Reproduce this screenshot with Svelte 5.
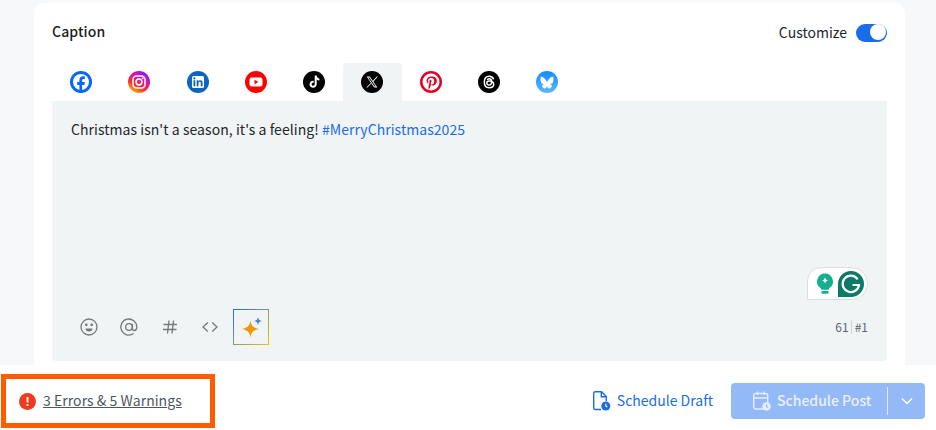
<script>
	const tabs = ['facebook', 'instagram', 'linkedin', 'youtube', 'tiktok', 'x', 'pinterest', 'threads', 'bluesky'];
	let active = 'x';
</script>

<div class="page">
	<main class="content">
		<section class="card">
			<div class="head">
				<h3>Caption</h3>
				<div class="customize">
					<span>Customize</span>
					<span class="toggle"><span class="knob"></span></span>
				</div>
			</div>

			<div class="tabs">
				{#each tabs as t}
					<div class="tab" class:active={t === active}>
						<svg width="22" height="22" viewBox="0 0 22 22">
							{#if t === 'facebook'}
								<circle cx="11" cy="11" r="11" fill="#0866ff" />
								<circle cx="11" cy="11" r="8" fill="#fff" />
								<path d="M9.4 22v-8H7.2v-3h2.2V9.2c0-2.9 1.4-4 3.6-4 .9 0 1.600.1 1.900.2v2.700h-1.300c-1.100 0-1.500.6-1.500 1.500V11h2.700l-.5 3h-2.200v8z" fill="#0866ff" />
							{:else if t === 'instagram'}
								<defs>
									<linearGradient id="ig" x1="0.2" y1="1" x2="0.8" y2="0">
										<stop offset="0" stop-color="#fdc20a" />
										<stop offset="0.35" stop-color="#f5302f" />
										<stop offset="0.7" stop-color="#d211b8" />
										<stop offset="1" stop-color="#7a1df0" />
									</linearGradient>
								</defs>
								<circle cx="11" cy="11" r="11" fill="url(#ig)" />
								<rect x="5" y="5" width="12" height="12" rx="3.500" fill="none" stroke="#fff" stroke-width="1.500" />
								<circle cx="11" cy="11" r="2.900" fill="none" stroke="#fff" stroke-width="1.500" />
								<circle cx="14.700" cy="7.300" r=".9" fill="#fff" />
							{:else if t === 'linkedin'}
								<circle cx="11" cy="11" r="11" fill="#0a66c2" />
								<rect x="5" y="5" width="12" height="12" rx="1.500" fill="#fff" />
								<rect x="6.500" y="9.300" width="1.800" height="6" fill="#0a66c2" />
								<circle cx="7.400" cy="7.400" r="1.050" fill="#0a66c2" />
								<path d="M9.700 9.300h1.700v.9c.4-.6 1-1.050 2-1.050 1.600 0 2.200 1 2.200 2.700v3.450h-1.800v-3.100c0-.9-.3-1.450-1.050-1.450-.8 0-1.250.55-1.250 1.450v3.100H9.700z" fill="#0a66c2" />
							{:else if t === 'youtube'}
								<circle cx="11" cy="11" r="11" fill="#ff0000" />
								<rect x="4.500" y="6.500" width="13" height="9" rx="2.200" fill="#fff" />
								<path d="M9.500 8.800v4.400l3.800-2.200z" fill="#ff0000" />
							{:else if t === 'tiktok'}
								<circle cx="11" cy="11" r="11" fill="#000" />
								<path d="M11.700 4.500h2c.1 1.700 1.100 2.800 2.700 2.900v2c-1 0-1.900-.3-2.700-.9v4.600c0 2.200-1.700 3.700-3.600 3.700-2 0-3.600-1.600-3.600-3.600 0-2.200 1.900-3.900 4.200-3.500v2.100c-1.100-.3-2.100.4-2.100 1.450 0 .9.700 1.500 1.500 1.500.9 0 1.600-.7 1.600-1.700z" fill="#fff" />
							{:else if t === 'x'}
								<circle cx="11" cy="11" r="11" fill="#000" />
								<path d="M5.600 5.500h3.200l7.600 11h-3.200zM7.200 6.400l6.400 9.200h1.200L8.400 6.400z" fill="#fff" />
								<path d="M15.800 5.500l-4.300 4.800.6.700 4.800-5.500zM9.800 12l-4.400 4.500h1.100l3.800-3.900z" fill="#fff" />
							{:else if t === 'pinterest'}
								<circle cx="11" cy="11" r="11" fill="#e60023" />
								<circle cx="11" cy="11" r="8.500" fill="#fff" />
								<path d="M11.300 5.600c-3 0-4.700 1.900-4.700 4 0 1 .5 2.200 1.400 2.600.3.100.3 0 .5-.7 0-.2 0-.3-.1-.5-.9-1.300-.2-4 2.700-4 2 0 3.100 1.200 3.100 2.900 0 2-.9 3.600-2.200 3.600-.7 0-1.300-.6-1.100-1.300.2-.9.6-1.800.6-2.500 0-1.500-2.200-1.300-2.200.7 0 .6.200 1 .2 1l-.9 3.700c-.2 1-.1 2.400 0 3.300.1.100.2.100.3 0 .5-.7 1.200-1.900 1.500-2.900l.5-1.900c.3.500 1 1 1.900 1 2.400 0 4.100-2.200 4.100-5 0-2.300-2-4-4.600-4z" fill="#e60023" />
							{:else if t === 'threads'}
								<circle cx="11" cy="11" r="11" fill="#000" />
								<path d="M15.600 8.400c-.5-2-2-3.100-4.400-3.100-3.200 0-4.900 2.200-4.900 5.700s1.700 5.700 4.900 5.700c2.800 0 4.500-1.600 4.500-3.500 0-2.100-1.900-3.300-4.400-3.100-1.500.1-2.500.9-2.500 2 0 1.200 1.100 1.900 2.400 1.800 1.700-.1 2.500-1.300 2.500-3.500 0-1.600-.9-2.600-2.300-2.600-1 0-1.700.4-2.100 1.100" fill="none" stroke="#fff" stroke-width="1.500" />
							{:else}
								<defs>
									<linearGradient id="bs" x1="0" y1="0" x2="0" y2="1">
										<stop offset="0" stop-color="#0f8cff" />
										<stop offset="1" stop-color="#59b9ff" />
									</linearGradient>
								</defs>
								<circle cx="11" cy="11" r="11" fill="url(#bs)" />
								<path d="M7.400 6.500c1.500 1.100 3 3.300 3.600 4.500.6-1.200 2.100-3.400 3.600-4.500 1.100-.8 2.900-1.400 2.900.6 0 .4-.2 3.400-.4 3.900-.5 1.700-2.200 2.100-3.800 1.900 2.700.5 3.400 2 1.900 3.500-2.800 2.900-4-.7-4.200-1.500-.2.800-1.400 4.400-4.200 1.500-1.500-1.500-.8-3 1.900-3.500-1.600.2-3.300-.2-3.800-1.900-.2-.5-.4-3.500-.4-3.900 0-2 1.800-1.400 2.900-.6z" fill="#fff" />
							{/if}
						</svg>
					</div>
				{/each}
			</div>

			<div class="editor">
				<p class="text">Christmas isn't a season, it's a feeling! <span class="tag">#MerryChristmas2025</span></p>

				<div class="grammarly">
					<svg width="20" height="26" viewBox="0 0 22 26">
						<path d="M11 1.500a8.800 8.800 0 0 0-5 16c.6.500.9 1 .9 1.800h8.200c0-.8.300-1.300.9-1.800a8.800 8.800 0 0 0-5-16z" fill="#12b08f" />
						<path d="M11 5.500c.5 2.300 1.300 3.100 3.600 3.700-2.300.5-3.100 1.300-3.600 3.600-.5-2.300-1.300-3.100-3.600-3.600 2.300-.6 3.100-1.400 3.600-3.700z" fill="#fff" />
						<rect x="7" y="20.800" width="8" height="2.800" rx="1.400" fill="#12b08f" />
					</svg>
					<svg width="26" height="26" viewBox="0 0 26 26">
						<path d="M13 0C20.200 0 26 5.800 26 13S20.200 26 13 26H0V13C0 5.800 5.800 0 13 0z" fill="#0b7a67" />
						<path d="M19.700 8.300A8.200 8.200 0 1 0 21 14h-6.500" fill="none" stroke="#fff" stroke-width="2.200" />
					</svg>
				</div>

				<div class="tools">
					<button class="tool" aria-label="emoji">
						<svg width="20" height="20" viewBox="0 0 20 20" fill="none" stroke="#75797d" stroke-width="1.300">
							<circle cx="10" cy="10" r="8" />
							<circle cx="7.300" cy="7.800" r=".7" fill="#75797d" />
							<circle cx="12.700" cy="7.800" r=".7" fill="#75797d" />
							<path d="M6.500 11.500h7c0 2-1.500 3-3.500 3s-3.500-1-3.500-3z" fill="#75797d" stroke="none" />
						</svg>
					</button>
					<button class="tool" aria-label="mention">
						<svg width="20" height="20" viewBox="0 0 20 20" fill="none" stroke="#75797d" stroke-width="1.300">
							<circle cx="10" cy="10" r="3.300" />
							<path d="M13.300 6.700v4.800c0 1.300 1 2 2.100 2 1.200 0 2.400-1 2.400-3.500a8 8 0 1 0-3.300 6.500" />
						</svg>
					</button>
					<button class="tool" aria-label="hashtag">
						<svg width="20" height="20" viewBox="0 0 20 20" fill="none" stroke="#75797d" stroke-width="1.300">
							<path d="M3.500 7.500h13.500M3 12.500h13.500M9 3.500l-1.500 13M13.500 3.500l-1.500 13" />
						</svg>
					</button>
					<button class="tool" aria-label="code">
						<svg width="20" height="20" viewBox="0 0 20 20" fill="none" stroke="#75797d" stroke-width="1.300">
							<path d="M7.800 5.500L3 10l4.800 4.500M12.200 5.500L17 10l-4.800 4.500" />
						</svg>
					</button>
					<button class="ai" aria-label="ai assistant">
						<svg width="24" height="24" viewBox="0 0 24 24">
							<path d="M11.500 5.500c.8 5 2.500 7.200 8.500 8.500-6 1.300-7.700 3.500-8.500 8.500-.8-5-2.500-7.200-8.500-8.500 6-1.300 7.700-3.500 8.500-8.500z" fill="#ec9a06" />
							<path d="M19 2c.4 2.500 1.200 3.500 4 4-2.800.5-3.600 1.500-4 4-.4-2.500-1.200-3.500-4-4 2.800-.5 3.600-1.500 4-4z" fill="#4c83c4" />
						</svg>
					</button>
					<div class="counts">
						<span>61</span><span class="sep"></span><span>#1</span>
					</div>
				</div>
			</div>
		</section>
	</main>

	<footer class="footer">
		<div class="errors">
			<svg width="17" height="17" viewBox="0 0 16 16">
				<circle cx="8" cy="8" r="8" fill="#ee3a1f" />
				<rect x="7.100" y="3.600" width="1.800" height="5.600" rx=".9" fill="#fff" />
				<circle cx="8" cy="11.300" r="1.050" fill="#fff" />
			</svg>
			<span class="err-link">3 Errors &amp; 5 Warnings</span>
		</div>

		<div class="actions">
			<div class="draft">
				<svg width="20" height="22" viewBox="0 0 20 22" fill="none" stroke="#1a6dea" stroke-width="1.400">
					<path d="M9 19.500H3.200a1.500 1.500 0 0 1-1.500-1.500V3.200a1.500 1.500 0 0 1 1.500-1.500h6.300l4.800 4.800V11" />
					<path d="M9.300 1.700v5h5" />
					<circle cx="13.800" cy="16" r="4.500" fill="#1a6dea" stroke="none" />
					<path d="M13.800 13.800V16l1.500 1" stroke="#fff" stroke-width="1.100" />
				</svg>
				<span>Schedule Draft</span>
			</div>
			<div class="post">
				<div class="post-main">
					<svg width="20" height="22" viewBox="0 0 20 22" fill="none" stroke="#e4edfc" stroke-width="1.400">
						<rect x="1.700" y="3.500" width="14" height="15.500" rx="2" />
						<path d="M1.700 8h14M5.500 1.500v3.500M12 1.500v3.500" />
						<circle cx="14.500" cy="16.500" r="4.300" fill="#e4edfc" stroke="none" />
						<path d="M14.500 14.300v2.200l1.500 1" stroke="#94b9f7" stroke-width="1.100" />
					</svg>
					<span>Schedule Post</span>
				</div>
				<div class="post-more">
					<svg width="14" height="8" viewBox="0 0 14 8" fill="none" stroke="#fff" stroke-width="1.500"><path d="M2 1.500l5 5 5-5" /></svg>
				</div>
			</div>
		</div>
	</footer>
</div>

<style>
	:global(body) {
		margin: 0;
		font-family: "Noto Sans CJK SC", "Noto Sans", sans-serif;
		background: #f6f8fa;
	}

	.page {
		width: 936px;
		height: 430px;
		display: flex;
		flex-direction: column;
		overflow: hidden;
	}

	.content {
		height: 365px;
		padding: 3px 31px 0 34px;
		box-sizing: border-box;
		overflow: hidden;
	}

	.card {
		background: #fff;
		border-radius: 10px 10px 0 0;
		height: 362px;
		padding: 0 18px 4px;
		box-sizing: border-box;
		display: flex;
		flex-direction: column;
	}

	.head {
		display: flex;
		justify-content: space-between;
		align-items: center;
		height: 60px;
		flex: none;
	}

	h3 {
		margin: 0 0 5px;
		font-size: 14px;
		font-weight: 500;
		letter-spacing: .1px;
		color: #1b1f24;
	}

	.customize {
		display: flex;
		align-items: center;
		gap: 9px;
		font-size: 14px;
		color: #22272d;
		margin-bottom: 1px;
	}

	.customize span:first-child {
		margin-bottom: 2px;
	}

	.toggle {
		width: 31px;
		height: 18px;
		border-radius: 9px;
		background: #1a6dea;
		display: flex;
		justify-content: flex-end;
		align-items: center;
		padding: 0 1px;
		box-sizing: border-box;
	}

	.knob {
		width: 16px;
		height: 16px;
		border-radius: 50%;
		background: #fff;
	}

	.tabs {
		display: flex;
		height: 38px;
		flex: none;
	}

	.tab {
		width: 58.250px;
		display: flex;
		justify-content: center;
		align-items: center;
		border-radius: 4px 4px 0 0;
	}

	.tab.active {
		background: #f1f4f5;
	}

	.editor {
		position: relative;
		flex: 1;
		background: #f1f4f5;
		border-radius: 0 0 4px 4px;
		padding: 18px 19px 0;
		display: flex;
		flex-direction: column;
	}

	.text {
		margin: 0;
		font-size: 14px;
		line-height: 20px;
		letter-spacing: .05px;
		color: #22272d;
	}

	.tag {
		color: #1a6dea;
	}

	.grammarly {
		position: absolute;
		right: 19px;
		top: 166px;
		width: 61px;
		height: 33px;
		box-sizing: border-box;
		background: #fff;
		border: 1px solid #d8dde6;
		border-radius: 14px 16px 16px 0;
		display: flex;
		align-items: center;
		gap: 3px;
		padding-left: 7px;
	}

	.tools {
		margin-top: auto;
		height: 52px;
		display: flex;
		align-items: flex-start;
	}

	button {
		border: none;
		background: none;
		padding: 0;
	}

	.tool {
		width: 20px;
		height: 20px;
		margin: 8px 20.330px 0 0;
	}

	.tool:first-child {
		margin-left: 8px;
	}

	.tool:nth-child(4) {
		margin-right: 13px;
	}

	.ai {
		width: 36px;
		height: 36px;
		box-sizing: border-box;
		border: 1px solid;
		border-image: linear-gradient(135deg, #1a6dea, #f5c400) 1;
		display: flex;
		align-items: center;
		justify-content: center;
	}

	.counts {
		margin-left: auto;
		display: flex;
		align-items: center;
		height: 15px;
		margin-top: 10px;
		font-size: 12px;
		color: #5c6670;
	}

	.sep {
		width: 1px;
		height: 14px;
		background: #cfd4d8;
		margin: 0 3px 0 2px;
	}

	.footer {
		height: 65px;
		flex: none;
		background: #fff;
		display: flex;
		align-items: center;
		justify-content: space-between;
		padding: 9px 11px 2px 1px;
		box-sizing: border-box;
	}

	.errors {
		width: 214px;
		height: 54px;
		box-sizing: border-box;
		border: 5px solid #ff5c00;
		display: flex;
		align-items: center;
		gap: 7px;
		padding-left: 13px;
		font-size: 14px;
		letter-spacing: .05px;
		color: #4e5761;
	}

	.err-link {
		text-decoration: underline;
	}

	.err-link,
	.draft span,
	.post-main span {
		margin-bottom: 2px;
	}

	.actions {
		display: flex;
		align-items: center;
		gap: 18px;
	}

	.draft {
		display: flex;
		align-items: center;
		gap: 5px;
		font-size: 14px;
		color: #1a6dea;
	}

	.post {
		width: 194px;
		height: 36px;
		background: #94b9f7;
		border-radius: 4px;
		display: flex;
		align-items: center;
		color: #e9f0fd;
		font-size: 14px;
		font-weight: 500;
	}

	.post-main {
		flex: 1;
		height: 28px;
		border-right: 1px solid #dfe9fc;
		display: flex;
		align-items: center;
		gap: 5px;
		padding-left: 21px;
	}

	.post-more {
		width: 37px;
		display: flex;
		justify-content: center;
	}
</style>
